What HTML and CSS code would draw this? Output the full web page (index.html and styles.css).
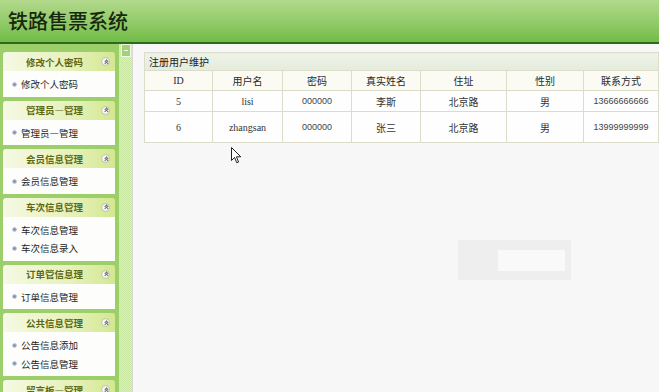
FILE: index.html
```html
<!DOCTYPE html>
<html lang="zh-CN">
<head>
    <meta charset="UTF-8">
    <title>铁路售票系统</title>
    <link rel="stylesheet" href="styles.css">
</head>
<body>
    <div class="page">
        <div class="top">
            <h1>铁路售票系统</h1>
        </div>
        <div class="main">
            <div class="sidebar">
                <div class="panel">
                    <div class="panel-head"><span>修改个人密码</span><i class="fold"></i></div>
                    <ul class="panel-body">
                        <li>修改个人密码</li>
                    </ul>
                </div>
                <div class="panel">
                    <div class="panel-head"><span>管理员—管理</span><i class="fold"></i></div>
                    <ul class="panel-body">
                        <li>管理员—管理</li>
                    </ul>
                </div>
                <div class="panel">
                    <div class="panel-head"><span>会员信息管理</span><i class="fold"></i></div>
                    <ul class="panel-body">
                        <li>会员信息管理</li>
                    </ul>
                </div>
                <div class="panel">
                    <div class="panel-head"><span>车次信息管理</span><i class="fold"></i></div>
                    <ul class="panel-body">
                        <li>车次信息管理</li>
                        <li>车次信息录入</li>
                    </ul>
                </div>
                <div class="panel">
                    <div class="panel-head"><span>订单管信息理</span><i class="fold"></i></div>
                    <ul class="panel-body">
                        <li>订单信息管理</li>
                    </ul>
                </div>
                <div class="panel">
                    <div class="panel-head"><span>公共信息管理</span><i class="fold"></i></div>
                    <ul class="panel-body">
                        <li>公告信息添加</li>
                        <li>公告信息管理</li>
                    </ul>
                </div>
                <div class="panel">
                    <div class="panel-head"><span>留言板—管理</span><i class="fold"></i></div>
                    <ul class="panel-body">
                        <li>留言板管理</li>
                    </ul>
                </div>
            </div>
            <div class="splitter">
                <div class="split-btn"></div>
            </div>
            <div class="content">
                <table class="grid">
                    <colgroup>
                        <col class="c1"><col class="c2"><col class="c3"><col class="c4">
                        <col class="c5"><col class="c6"><col class="c7">
                    </colgroup>
                    <tr class="caption-row">
                        <td colspan="7">注册用户维护</td>
                    </tr>
                    <tr class="head-row">
                        <th>ID</th>
                        <th>用户名</th>
                        <th>密码</th>
                        <th>真实姓名</th>
                        <th>住址</th>
                        <th>性别</th>
                        <th>联系方式</th>
                    </tr>
                    <tr class="row">
                        <td>5</td>
                        <td>lisi</td>
                        <td class="num">000000</td>
                        <td>李斯</td>
                        <td>北京路</td>
                        <td>男</td>
                        <td class="num">13666666666</td>
                    </tr>
                    <tr class="row tall">
                        <td>6</td>
                        <td>zhangsan</td>
                        <td class="num">000000</td>
                        <td>张三</td>
                        <td>北京路</td>
                        <td>男</td>
                        <td class="num">13999999999</td>
                    </tr>
                </table>
                <div class="ghost-tip"><div class="ghost-inner"></div></div>
                <svg class="cursor" width="11" height="17" viewBox="0 0 11 17">
                    <path d="M0.5 0.5 L0.5 13.5 L3.5 10.5 L5.8 15.8 L7.6 15 L5.4 9.8 L9.8 9.8 Z" fill="#fff" stroke="#222" stroke-width="1"/>
                </svg>
            </div>
        </div>
    </div>
</body>
</html>
```

FILE: styles.css
```css
body {
    margin: 0;
    background: #fff;
    font-family: "Noto Sans CJK SC", "Liberation Sans", sans-serif;
    color: #222;
}
.page {
    width: 659px;
    height: 392px;
    overflow: hidden;
}
.top {
    height: 42px;
    background: linear-gradient(#b2d98c, #94cb6b 50%, #71bc47);
    border-bottom: 2px solid #2e6a1c;
    display: flex;
    align-items: center;
}
.top h1 {
    margin: 0 0 0 8px;
    font-size: 20px;
    font-weight: 500;
    color: #17280e;
    line-height: 1;
}
.main {
    display: flex;
    height: 348px;
    overflow: hidden;
}
.sidebar {
    width: 119px;
    flex-shrink: 0;
    background: #9ccf69;
    padding: 8px 4px 0 3px;
    box-sizing: border-box;
    display: flex;
    flex-direction: column;
    gap: 4px;
}
.panel {
    flex-shrink: 0;
    border-radius: 3px 3px 0 0;
    overflow: hidden;
}
.panel-head {
    height: 19px;
    display: flex;
    align-items: center;
    background: linear-gradient(90deg, #f6f9e4, #e6f1bc 60%, #d3e890);
    font-size: 9.5px;
    font-weight: 700;
    color: #5d6912;
    padding-left: 5px;
}
.panel-head span {
    flex: 1;
    text-align: center;
}
.fold {
    width: 9px;
    height: 9px;
    margin-right: 5px;
    border-radius: 50%;
    background: #f7f7f2;
    border: 1px solid #bcc0a8;
    box-sizing: border-box;
    position: relative;
}
.fold:before, .fold:after {
    content: "";
    position: absolute;
    left: 2.5px;
    width: 2px;
    height: 2px;
    border-left: 1px solid #666;
    border-top: 1px solid #666;
    transform: rotate(45deg);
}
.fold:before { top: 1.5px; }
.fold:after { top: 3.5px; }
.panel-body {
    list-style: none;
    margin: 0;
    padding: 4px 0 3px;
    background: #fdfdfb;
}
.panel-body li {
    height: 18.5px;
    display: flex;
    align-items: center;
    font-size: 9.5px;
    color: #1e1e1e;
    padding-left: 9px;
}
.panel-body li:before {
    content: "";
    width: 3px;
    height: 3px;
    border-radius: 50%;
    background: #7f97b6;
    border: 1px solid #c6d0de;
    margin-right: 4px;
}
.splitter {
    width: 14px;
    flex-shrink: 0;
    background: repeating-conic-gradient(#c8e6a2 0 25%, #dcefc4 0 50%) 0 0 / 2px 2px;
    border-right: 1px solid #d9dccd;
    box-sizing: border-box;
    padding: 0 1px 0 2px;
}
.split-btn {
    height: 11px;
    background: #a3d276;
    border: 1px solid #f2f8ea;
    position: relative;
}
.split-btn:after {
    content: "";
    position: absolute;
    left: 2px;
    right: 2px;
    top: 5px;
    height: 1px;
    background: #f4f9ee;
}
.content {
    flex: 1;
    min-width: 0;
    background: #f7f7f7;
    padding: 8px 0 0 11px;
    position: relative;
}
.grid {
    border-collapse: collapse;
    width: 514px;
    font-family: "Liberation Serif", "Noto Sans CJK SC", serif;
    font-size: 10px;
    color: #333;
    table-layout: fixed;
}
.grid td, .grid th {
    border: 1px solid #dcdccb;
    padding: 0;
    text-align: center;
    font-weight: 400;
}
.caption-row td {
    height: 17px;
    text-align: left;
    padding-left: 4px;
    background: linear-gradient(#eef3e8, #e4ecdc);
    font-family: "Noto Sans CJK SC", sans-serif;
    color: #1d1d1d;
}
.head-row th {
    height: 19px;
    background: #fbfbf4;
    color: #2a2a2a;
}
.row td {
    height: 20px;
    background: #fefefe;
}
.row.tall td {
    height: 30px;
}
.grid .num {
    font-family: "Liberation Sans", sans-serif;
    font-size: 9px;
    color: #444;
}
.c1 { width: 68px; }
.c2 { width: 70px; }
.c3 { width: 69px; }
.c4 { width: 69px; }
.c5 { width: 86px; }
.c6 { width: 77px; }
.c7 { width: 75px; }
.ghost-tip {
    position: absolute;
    left: 325px;
    top: 196px;
    width: 113px;
    height: 40px;
    background: #eeeeee;
    display: flex;
    justify-content: flex-end;
    align-items: center;
    padding-right: 6px;
    box-sizing: border-box;
}
.ghost-inner {
    width: 67px;
    height: 21px;
    background: #f9f9f9;
}
.cursor {
    position: absolute;
    left: 98px;
    top: 103px;
}
```
